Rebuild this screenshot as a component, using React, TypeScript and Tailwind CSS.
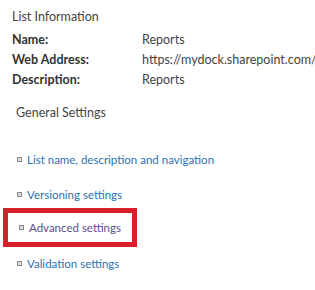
const links = [
  { label: "List name, description and navigation", visited: false },
  { label: "Versioning settings", visited: false },
  { label: "Advanced settings", visited: true, marked: true },
  { label: "Validation settings", visited: false },
];

const Bullet = () => (
  <span className="inline-block w-[5px] h-[5px] border border-[#8a8a8a] bg-[#dcdcdc] shrink-0" />
);

export default function App() {
  return (
    <div
      className="w-[315px] h-[290px] bg-white overflow-hidden"
      style={{ fontFamily: 'Lato, "Open Sans", sans-serif' }}
    >
      {/* List information */}
      <div className="pl-3 pt-[7px]">
        <h2 className="text-[12.5px] leading-[20px] text-[#444]">List Information</h2>
        <div className="grid grid-cols-[130px_1fr] mt-[3px] text-[12.5px] leading-[20px] whitespace-nowrap">
          <span className="font-bold text-[#333]">Name:</span>
          <span className="text-[#444]">Reports</span>
          <span className="font-bold text-[#333]">Web Address:</span>
          <span className="text-[#444]">https://mydock.sharepoint.com/sites</span>
          <span className="font-bold text-[#333]">Description:</span>
          <span className="text-[#444]">Reports</span>
        </div>
      </div>

      {/* General settings */}
      <div className="pl-4 mt-[13px]">
        <h3 className="text-[12.5px] leading-[20px] text-[#444]">General Settings</h3>
      </div>
      <ul className="mt-[19px] flex flex-col">
        {links.map((l) => (
          <li
            key={l.label}
            className={
              l.marked
                ? "ml-[3px] w-[134px] h-[39px] border-[5px] border-[#d81f2a] flex items-center pl-[11px] gap-[5px] mt-[-4px] mb-[-1px]"
                : "h-[35px] flex items-center pl-[17px] gap-[5px]"
            }
          >
            <Bullet />
            <a
              className={
                "text-[11.5px] whitespace-nowrap " +
                (l.visited ? "text-[#5b4d8c]" : "text-[#2b71b1]")
              }
            >
              {l.label}
            </a>
          </li>
        ))}
      </ul>
    </div>
  );
}
